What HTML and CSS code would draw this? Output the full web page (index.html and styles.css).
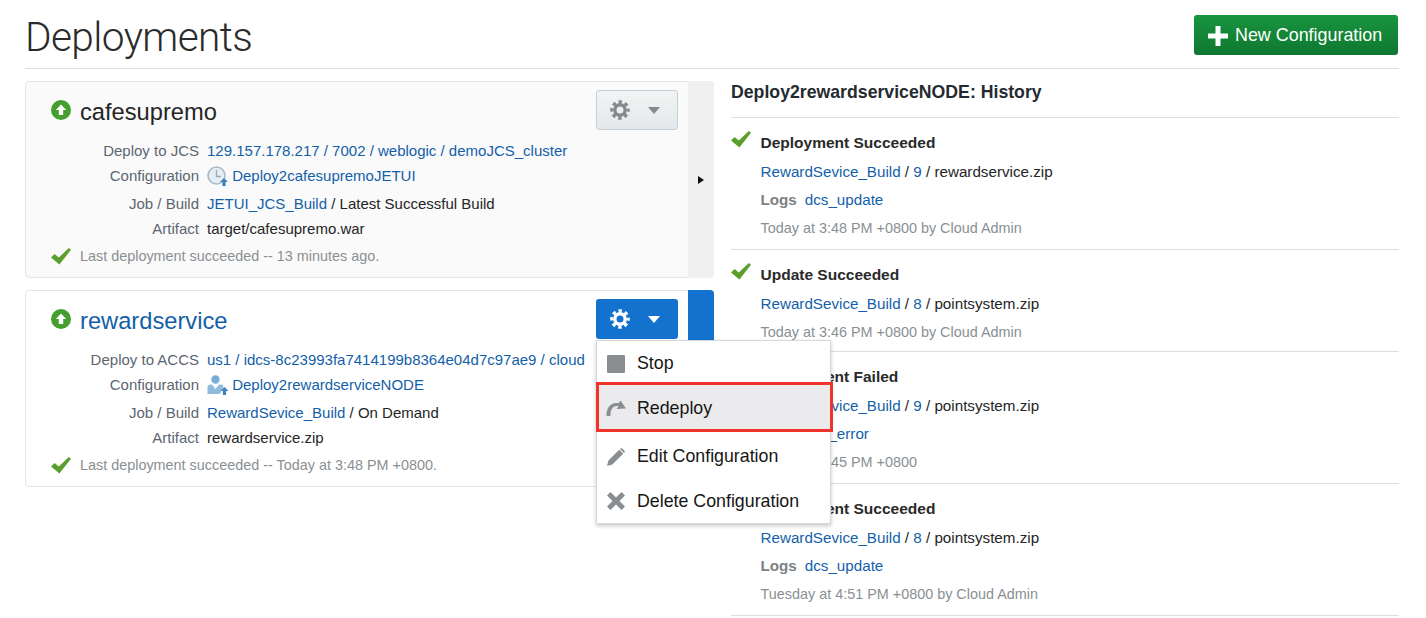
FILE: index.html
```html
<html>
  <head>
    <title>Deployments</title>
    <link rel="stylesheet" href="styles.css">
  </head>
  <body>
    <svg class="defs" width="0" height="0">
      <symbol id="i-check" viewBox="0 0 20 17">
        <path d="M0 9.5 L3.6 6 L7.8 9.6 L17.8 0 L20 1.8 L8.4 16.6 Z" fill="#5a9f2d"/>
      </symbol>
      <symbol id="i-up" viewBox="0 0 20 20">
        <circle cx="10" cy="10" r="10" fill="#459f2f"/>
        <path d="M10 4.5 L15.2 10 H12.2 V15 H7.8 V10 H4.8 Z" fill="#fff"/>
      </symbol>
      <symbol id="i-gear" viewBox="0 0 20 20">
        <circle cx="10" cy="10" r="5.2" fill="none" stroke="currentColor" stroke-width="3.4"/>
        <circle cx="10" cy="10" r="8.2" fill="none" stroke="currentColor" stroke-width="3.2" stroke-dasharray="3.4 3.04" stroke-dashoffset="1.7"/>
      </symbol>
      <symbol id="i-arrow" viewBox="0 0 10 10">
        <path d="M5 2 L9 6 H6.6 V10 H3.4 V6 H1 Z" fill="#3d83bd"/>
      </symbol>
    </svg>

    <div class="page">
      <div class="page-header">
        <h1>Deployments</h1>
        <button class="new-btn">
          <svg width="20" height="20" viewBox="0 0 20 20"><path d="M7.5 0 H12.5 V7.5 H20 V12.5 H12.5 V20 H7.5 V12.5 H0 V7.5 H7.5 Z" fill="#fff"/></svg>
          New Configuration
        </button>
      </div>

      <div class="columns">
        <div class="deployments">
          <div class="card">
            <div class="card-main">
              <div class="card-head">
                <div class="card-title">
                  <svg width="20" height="20"><use href="#i-up"/></svg>
                  <span>cafesupremo</span>
                </div>
                <button class="gear-btn">
                  <svg width="20" height="20"><use href="#i-gear"/></svg>
                  <span class="caret"></span>
                </button>
              </div>
              <div class="details">
                <div class="label">Deploy to JCS</div>
                <div class="value"><a>129.157.178.217 / 7002 / weblogic / demoJCS_cluster</a></div>
                <div class="label">Configuration</div>
                <div class="value">
                  <svg class="config-icon" width="24" height="20" viewBox="0 0 24 20">
                    <circle cx="9.5" cy="9.5" r="8.5" fill="#e6edf3" stroke="#a9b9c7" stroke-width="1.6"/>
                    <path d="M9.5 4 V10.5 H14" fill="none" stroke="#9badbc" stroke-width="1.4"/>
                    <svg x="12" y="10" width="10" height="10"><use href="#i-arrow"/></svg>
                  </svg>
                  <a>Deploy2cafesupremoJETUI</a>
                </div>
                <div class="label gap">Job / Build</div>
                <div class="value gap"><a>JETUI_JCS_Build</a> / Latest Successful Build</div>
                <div class="label">Artifact</div>
                <div class="value">target/cafesupremo.war</div>
              </div>
              <div class="status">
                <svg width="20" height="17"><use href="#i-check"/></svg>
                <span>Last deployment succeeded -- 13 minutes ago.</span>
              </div>
            </div>
            <div class="card-side">
              <span class="side-arrow"></span>
            </div>
          </div>

          <div class="card card-active">
            <div class="card-main">
              <div class="card-head">
                <div class="card-title">
                  <svg width="20" height="20"><use href="#i-up"/></svg>
                  <a>rewardservice</a>
                </div>
                <button class="gear-btn">
                  <svg width="20" height="20"><use href="#i-gear"/></svg>
                  <span class="caret"></span>
                </button>
              </div>
              <div class="details">
                <div class="label">Deploy to ACCS</div>
                <div class="value"><a>us1 / idcs-8c23993fa7414199b8364e04d7c97ae9 / cloud</a></div>
                <div class="label">Configuration</div>
                <div class="value">
                  <svg class="config-icon" width="24" height="20" viewBox="0 0 24 20">
                    <circle cx="8.5" cy="4.5" r="4.2" fill="#79aed8"/>
                    <path d="M0.5 19 V12 Q0.5 9.5 3.5 9.5 H5 L8.5 14 L12 9.5 H13.5 Q16.5 9.5 16.5 12 V19 Z" fill="#8fbbdd"/>
                    <path d="M12 20 L17.5 11 L23 20 Z" fill="#fff"/>
                    <svg x="12.5" y="10" width="10" height="10"><use href="#i-arrow"/></svg>
                  </svg>
                  <a>Deploy2rewardserviceNODE</a>
                </div>
                <div class="label gap">Job / Build</div>
                <div class="value gap"><a>RewardSevice_Build</a> / On Demand</div>
                <div class="label">Artifact</div>
                <div class="value">rewardservice.zip</div>
              </div>
              <div class="status">
                <svg width="20" height="17"><use href="#i-check"/></svg>
                <span>Last deployment succeeded -- Today at 3:48 PM +0800.</span>
              </div>
            </div>
            <div class="card-side"></div>

            <div class="menu">
              <div class="menu-item item-stop">
                <svg width="18" height="18"><rect width="18" height="18" rx="1" fill="#8b8e91"/></svg>
                Stop
              </div>
              <div class="menu-item item-redeploy">
                <svg class="icon-wide" width="20" height="16" viewBox="0 0 20 16"><path d="M0.5 16 C0 7 6 1.5 12.5 3.2 L14.5 0.5 L20 8.5 L10.5 9 L12.4 6.4 C8 5 4 9 4.5 16 Z" fill="#8b8e91"/></svg>
                Redeploy
              </div>
              <div class="menu-item item-edit">
                <svg width="20" height="20" viewBox="0 0 20 20"><path d="M0 20 L1.6 14 L13.5 2 L18 6.5 L6 18.4 Z M15 0.6 Q16 -0.3 17 0.6 L19.4 3 Q20.3 4 19.4 5 L18.8 5.6 L14.4 1.2 Z" fill="#8b8e91"/></svg>
                Edit Configuration
              </div>
              <div class="menu-item item-delete">
                <svg width="18" height="18" viewBox="0 0 18 18"><path d="M3.5 0 L9 5.5 L14.5 0 L18 3.5 L12.5 9 L18 14.5 L14.5 18 L9 12.5 L3.5 18 L0 14.5 L5.5 9 L0 3.5 Z" fill="#8b8e91"/></svg>
                Delete Configuration
              </div>
            </div>
          </div>
        </div>

        <div class="history">
          <h2>Deploy2rewardserviceNODE: History</h2>

          <div class="history-item">
            <svg width="20" height="17"><use href="#i-check"/></svg>
            <div class="history-body">
              <div class="history-title">Deployment Succeeded</div>
              <div class="history-line"><a>RewardSevice_Build</a> / <a>9</a> / rewardservice.zip</div>
              <div class="history-line"><b class="logs">Logs</b><a>dcs_update</a></div>
              <div class="history-time">Today at 3:48 PM +0800 by Cloud Admin</div>
            </div>
          </div>

          <div class="history-item history-item-short">
            <svg width="20" height="17"><use href="#i-check"/></svg>
            <div class="history-body">
              <div class="history-title">Update Succeeded</div>
              <div class="history-line"><a>RewardSevice_Build</a> / <a>8</a> / pointsystem.zip</div>
              <div class="history-time">Today at 3:46 PM +0800 by Cloud Admin</div>
            </div>
          </div>

          <div class="history-item">
            <svg width="20" height="17"><use href="#i-check"/></svg>
            <div class="history-body">
              <div class="history-title">Deployment Failed</div>
              <div class="history-line"><a>RewardSevice_Build</a> / <a>9</a> / pointsystem.zip</div>
              <div class="history-line"><b class="logs">Logs</b><a>dcs_error</a></div>
              <div class="history-time">Today at 3:45 PM +0800</div>
            </div>
          </div>

          <div class="history-item">
            <svg width="20" height="17"><use href="#i-check"/></svg>
            <div class="history-body">
              <div class="history-title">Deployment Succeeded</div>
              <div class="history-line"><a>RewardSevice_Build</a> / <a>8</a> / pointsystem.zip</div>
              <div class="history-line"><b class="logs">Logs</b><a>dcs_update</a></div>
              <div class="history-time">Tuesday at 4:51 PM +0800 by Cloud Admin</div>
            </div>
          </div>
        </div>
      </div>
    </div>
  </body>
</html>
```

FILE: styles.css
```css
html,
body {
  margin: 0;
  padding: 0;
  height: 618px;
  overflow: hidden;
  background-color: #fff;
  font-family: "Liberation Sans", Arial, sans-serif;
  font-size: 15px;
  color: #252525;
}

a {
  color: #145fa9;
}

.defs {
  position: absolute;
}

.page {
  padding: 0 27px 0 25px;
}

.page-header {
  display: flex;
  justify-content: space-between;
  align-items: flex-start;
  height: 68px;
  border-bottom: 1px solid #d6dfe6;
}

h1 {
  margin: 10px 0 0 0;
  font-family: Roboto, sans-serif;
  font-weight: 300;
  font-size: 40.6px;
  line-height: 54px;
  letter-spacing: -0.6px;
  color: #2b2b2b;
}

.new-btn {
  display: flex;
  align-items: center;
  gap: 7px;
  box-sizing: border-box;
  width: 204px;
  height: 40px;
  margin-top: 15px;
  margin-right: 1px;
  padding: 1px 0 0 14px;
  border: none;
  border-radius: 3px;
  background-image: linear-gradient(to bottom, #18953f, #0f7730);
  font-family: "Liberation Sans", Arial, sans-serif;
  font-size: 17.9px;
  color: #fff;
}

.columns {
  display: flex;
  gap: 17px;
  margin-top: 12px;
}

.deployments {
  display: flex;
  flex-direction: column;
  gap: 12px;
  width: 689px;
}

.card {
  position: relative;
  display: flex;
  box-sizing: border-box;
  height: 197px;
  border: 1px solid #e5e5e5;
  border-radius: 4px;
  background-color: #fafafa;
}

.card-active {
  background-color: #fff;
}

.card-main {
  flex: 1;
  min-width: 0;
  overflow: hidden;
}

.card-side {
  display: flex;
  align-items: center;
  justify-content: center;
  flex: none;
  width: 26px;
  margin: -1px -1px -1px 0;
  border-radius: 0 4px 4px 0;
  background-color: #f0f0f0;
}

.card-active .card-side {
  background-color: #1272ce;
}

.side-arrow {
  width: 0;
  height: 0;
  border-left: 6px solid #111;
  border-top: 4px solid transparent;
  border-bottom: 4px solid transparent;
}

.card-head {
  display: flex;
  justify-content: space-between;
  align-items: center;
  padding: 8px 10px 0 25px;
}

.card-title {
  display: flex;
  align-items: center;
  gap: 9px;
  font-size: 23.7px;
  line-height: 32px;
}

.card-title span,
.card-title a {
  margin-top: 4px;
}

.gear-btn {
  display: flex;
  align-items: center;
  gap: 18px;
  box-sizing: border-box;
  width: 82px;
  height: 40px;
  padding: 0 0 0 13px;
  border: 1px solid #c4ced7;
  border-radius: 3px;
  background-image: linear-gradient(to bottom, #f2f4f4, #e4e8ea);
  color: #858a8e;
}

.caret {
  width: 0;
  height: 0;
  border-top: 7px solid #858a8e;
  border-left: 6px solid transparent;
  border-right: 6px solid transparent;
}

.card-active .gear-btn {
  border: none;
  padding-left: 14px;
  background-image: none;
  background-color: #1272ce;
  color: #fff;
}

.card-active .caret {
  border-top-color: #fff;
}

.details {
  display: grid;
  grid-template-columns: 173px 1fr;
  column-gap: 8px;
  margin-top: 8px;
  line-height: 25px;
}

.label {
  text-align: right;
  color: #5c6670;
}

.value {
  white-space: nowrap;
}

.gap {
  margin-top: 3px;
}

.config-icon {
  margin-right: -3px;
  vertical-align: -5px;
}

.status {
  display: flex;
  align-items: center;
  gap: 9px;
  margin-top: 3px;
  padding-left: 25px;
  font-size: 14.4px;
  line-height: 24px;
  color: #8a8f93;
}

.menu {
  position: absolute;
  z-index: 10;
  top: 49px;
  left: 570px;
  box-sizing: border-box;
  width: 235px;
  height: 184px;
  background-color: #fff;
  border: 1px solid #d4d8db;
  box-shadow: 0 2px 4px rgba(0, 0, 0, 0.22);
  font-size: 17.8px;
  color: #161616;
}

.menu-item {
  display: flex;
  align-items: center;
  gap: 12px;
  box-sizing: border-box;
  padding-left: 10px;
}

.menu-item svg {
  width: 18px;
  flex: none;
}

.menu-item .icon-wide {
  width: 20px;
  margin-left: -1px;
  margin-right: -1px;
}

.item-stop {
  height: 42px;
  padding-top: 3px;
}

.item-redeploy {
  height: 50px;
  margin: -1px -3px 0 -1px;
  border: 3px solid #f0342a;
  padding-top: 2px;
  padding-left: 8px;
  background-color: #ebebed;
}

.item-edit {
  height: 47px;
  padding-top: 2px;
}

.item-delete {
  height: 44px;
}

.history {
  flex: 1;
  min-width: 0;
}

h2 {
  margin: 0;
  height: 36px;
  border-bottom: 1px solid #d6dfe6;
  font-size: 17.7px;
  line-height: 23px;
  color: #252a30;
}

.history-item {
  display: flex;
  box-sizing: border-box;
  padding: 13px 0 9px 0;
  border-bottom: 1px solid #d6dfe6;
}

.history-item-short {
  padding-bottom: 7.5px;
}

.history-item > svg {
  flex: none;
  margin-right: 9.5px;
}

.history-title {
  font-size: 15.5px;
  font-weight: bold;
  line-height: 24px;
  color: #2a2a2a;
}

.history-line {
  margin-top: 4.5px;
  font-size: 15.2px;
  line-height: 24px;
}

.history-time {
  margin-top: 4px;
  font-size: 14.4px;
  line-height: 24px;
  color: #8a8f93;
}

.logs {
  margin-right: 8px;
  color: #7d8184;
}
```
